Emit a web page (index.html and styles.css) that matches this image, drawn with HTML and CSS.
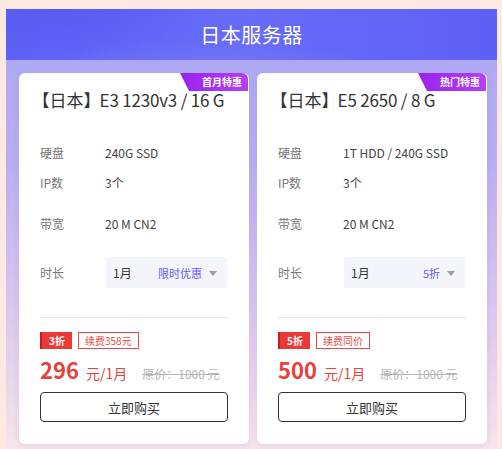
FILE: index.html
```html
<!DOCTYPE html>
<html lang="zh">
<head>
<meta charset="utf-8">
<link rel="stylesheet" href="styles.css">
</head>
<body>
<div class="panel">
  <div class="header"><h1 class="title">日本服务器</h1></div>
  <div class="cards">
    <div class="card">
      <div class="badge">首月特惠</div>
      <div class="card-title"><span class="br">【日本】</span> E3 1230v3 / 16 G</div>
      <div class="row r1"><span class="label">硬盘</span><span class="value">240G SSD</span></div>
      <div class="row r2"><span class="label">IP数</span><span class="value">3个</span></div>
      <div class="row r3"><span class="label">带宽</span><span class="value">20 M CN2</span></div>
      <div class="row r4"><span class="label">时长</span>
        <div class="select"><span class="sel-val">1月</span><span class="sel-tip">限时优惠</span><span class="arrow"></span></div>
      </div>
      <div class="divider"></div>
      <div class="tags"><span class="tag-fill">3折</span><span class="tag-line">续费358元</span></div>
      <div class="price"><span class="num">296</span><span class="unit">元/1月</span><span class="orig">原价：1000 元</span></div>
      <button class="buy">立即购买</button>
    </div>
    <div class="card">
      <div class="badge">热门特惠</div>
      <div class="card-title"><span class="br">【日本】</span> E5 2650 / 8 G</div>
      <div class="row r1"><span class="label">硬盘</span><span class="value">1T HDD / 240G SSD</span></div>
      <div class="row r2"><span class="label">IP数</span><span class="value">3个</span></div>
      <div class="row r3"><span class="label">带宽</span><span class="value">20 M CN2</span></div>
      <div class="row r4"><span class="label">时长</span>
        <div class="select"><span class="sel-val">1月</span><span class="sel-tip">5折</span><span class="arrow"></span></div>
      </div>
      <div class="divider"></div>
      <div class="tags"><span class="tag-fill">5折</span><span class="tag-line">续费同价</span></div>
      <div class="price"><span class="num">500</span><span class="unit">元/1月</span><span class="orig">原价：1000 元</span></div>
      <button class="buy">立即购买</button>
    </div>
  </div>
</div>
</body>
</html>
```

FILE: styles.css
```css
* { box-sizing: border-box; }
html, body { margin: 0; padding: 0; }
body {
  width: 502px;
  height: 449px;
  overflow: hidden;
  background: #fde8e2;
  font-family: "Noto Sans CJK SC", "Noto Sans", sans-serif;
  color: #333;
}
.panel {
  margin: 9px 0 0 6px;
  width: 491px;
  height: 440px;
  background: linear-gradient(180deg, #a9a6f4 0%, #b9aef2 35%, #dcc8ef 70%, #f7e4ea 100%);
}
.header {
  height: 51px;
  display: flex;
  align-items: center;
  justify-content: center;
  background:
    radial-gradient(ellipse 260px 60px at 200px 70px, rgba(140,145,255,0.45), rgba(140,145,255,0) 70%),
    radial-gradient(ellipse 200px 80px at 60px -10px, rgba(80,85,240,0.6), rgba(80,85,240,0) 70%),
    linear-gradient(90deg, #5d61f5 0%, #676bf7 50%, #5d60f4 100%);
}
.title {
  margin: 0;
  font-size: 20px;
  font-weight: 400;
  color: #fff;
  letter-spacing: 0.5px;
}
.cards {
  display: flex;
  gap: 8px;
  padding: 13px 0 0 13px;
}
.card {
  position: relative;
  width: 230px;
  height: 371px;
  background: #fff;
  border-radius: 6px;
  padding: 15px 21px 0 21px;
  box-shadow: 0 2px 6px rgba(120, 100, 200, 0.12);
}
.badge {
  position: absolute;
  top: 0;
  right: 1px;
  width: 68px;
  height: 18px;
  padding-right: 6px;
  text-align: right;
  font-size: 10px;
  line-height: 18px;
  font-weight: 700;
  color: #fff;
  background: linear-gradient(90deg, #9a24ee, #b63ef2);
  border-radius: 0 6px 0 4px;
  clip-path: polygon(0 0, 100% 0, 100% 100%, 9px 100%);
}
.card-title {
  font-size: 17px;
  line-height: 24px;
  margin-left: 1px;
  letter-spacing: -0.2px;
  white-space: nowrap;
  color: #333;
}
.br {
  font-feature-settings: "halt" 1;
  letter-spacing: 0;
  margin-right: 4px;
}
.row {
  display: flex;
  align-items: center;
  font-size: 12px;
  line-height: 18px;
}
.r1 { margin-top: 32px; }
.r2 { margin-top: 12px; }
.r3 { margin-top: 23px; }
.r4 { margin-top: 24px; }
.label { width: 65px; color: #777; }
.value { color: #444; }
.select {
  width: 121px;
  height: 31px;
  margin-left: 1px;
  background: #f4f5fa;
  border-radius: 2px;
  display: flex;
  align-items: center;
  padding: 0 10px 0 7px;
}
.sel-val { font-size: 12px; color: #333; flex: 1; }
.sel-tip { font-size: 11px; color: #6a5cf0; }
.arrow {
  margin-left: 7px;
  width: 0;
  height: 0;
  border-left: 4px solid transparent;
  border-right: 4px solid transparent;
  border-top: 5px solid #9a9aa6;
  margin-top: 2px;
}
.divider {
  margin-top: 29px;
  height: 1px;
  background: #e6e6ea;
}
.tags {
  margin-top: 14px;
  display: flex;
  gap: 6px;
  height: 17px;
}
.tag-fill {
  width: 32px;
  height: 17px;
  background: #ea3a36;
  color: #fff;
  font-size: 10px;
  font-weight: 700;
  line-height: 17px;
  text-align: center;
  border-left: 2px solid #c91d1d;
}
.tag-line {
  height: 17px;
  padding: 0 6px;
  border: 1px solid #e44a45;
  color: #e44a45;
  font-size: 10px;
  line-height: 15px;
}
.price {
  margin-top: 7px;
  height: 26px;
  display: flex;
  align-items: baseline;
  white-space: nowrap;
}
.num {
  font-size: 22px;
  font-weight: 700;
  color: #e8413c;
  line-height: 26px;
}
.unit {
  font-size: 14px;
  color: #e8413c;
  margin-left: 7px;
}
.orig {
  font-size: 12px;
  color: #b5b5b5;
  text-decoration: line-through;
  margin-left: 15px;
}
.buy {
  display: block;
  margin-top: 10px;
  width: 188px;
  height: 30px;
  background: #fff;
  border: 1px solid #333;
  border-radius: 4px;
  font-family: "Noto Sans CJK SC", "Noto Sans", sans-serif;
  font-size: 13px;
  color: #333;
  padding: 0;
}
```
